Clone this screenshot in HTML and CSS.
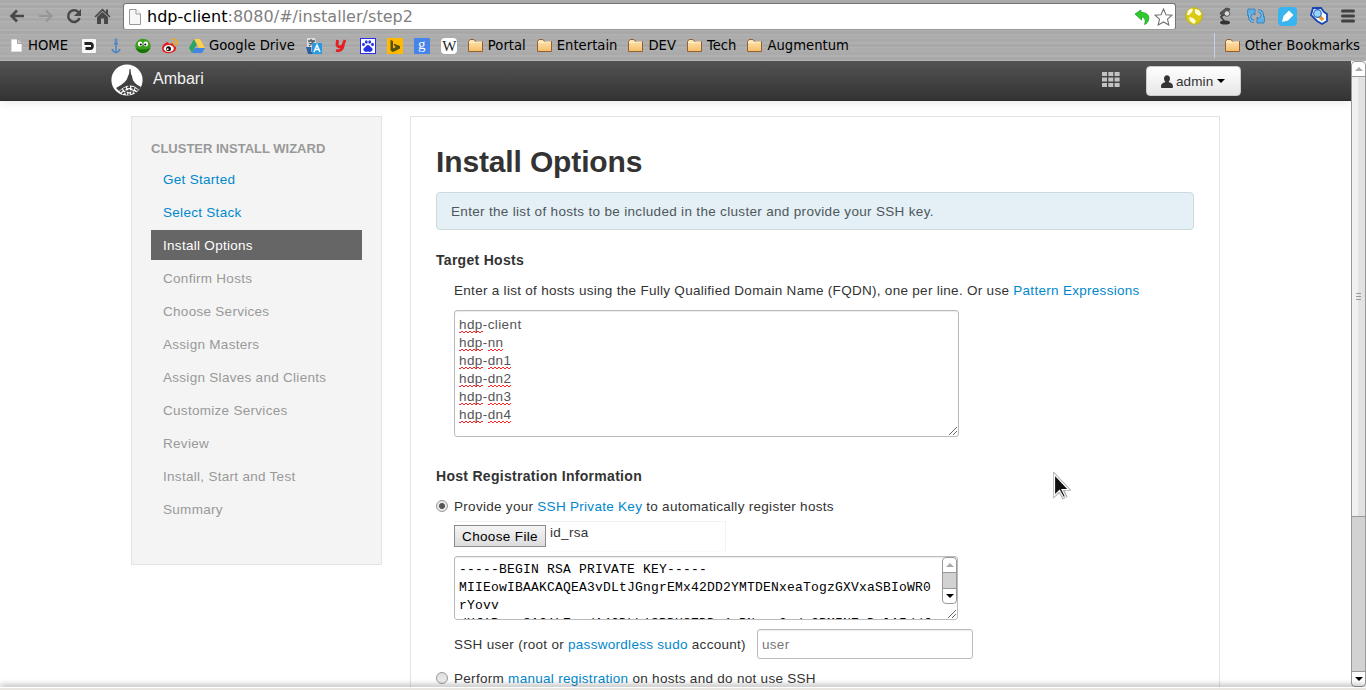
FILE: index.html
```html
<!DOCTYPE html>
<html lang="en">
<head>
<meta charset="utf-8">
<title>Ambari</title>
<link rel="stylesheet" href="styles.css">
</head>
<body>
<div class="browser">
  <header class="chrome">
    <div class="toolbar">
      <svg class="tool back" width="16" height="16" viewBox="0 0 16 16"><path d="M15 8H3M8 2.5L2.5 8L8 13.500" fill="none" stroke="#484848" stroke-width="2.600"/></svg>
      <svg class="tool forward" width="16" height="16" viewBox="0 0 16 16"><path d="M1 8H13M8 2.500L13.500 8L8 13.500" fill="none" stroke="#969696" stroke-width="2.200"/></svg>
      <svg class="tool reload" width="16" height="16" viewBox="0 0 16 16"><path d="M12.300 4.200A5.800 5.800 0 1 0 13.500 10" fill="none" stroke="#484848" stroke-width="2.500"/><path d="M15 1V8H8Z" fill="#484848"/></svg>
      <svg class="tool home" width="17" height="16" viewBox="0 0 17 16"><path d="M8.500 .5L12 4V1.500H14V6L16.500 8.500L15.500 9.500L8.500 3L1.500 9.500L.5 8.500Z" fill="#484848"/><path d="M3 9L8.500 4L14 9V16H10V10.500H7V16H3Z" fill="#484848"/></svg>
      <div class="omnibox">
        <svg width="12" height="16" viewBox="0 0 12 16"><path d="M.5 .5H7L11.500 5V15.500H.5Z" fill="#f6f6f6" stroke="#999"/><path d="M7 .5V5H11.500" fill="#fff" stroke="#999"/></svg>
        <span class="url"><b>hdp-client</b>:8080/#/installer/step2</span>
        <svg class="undo" width="16" height="16" viewBox="0 0 16 16"><path d="M1 5L7 1V3.500C13 3 16 7 14.500 11C14 13 12.500 15 10.500 15.500C12 11.500 11 8.500 7.500 8V11Z" fill="#2ecc2b" stroke="#16951a" stroke-width=".7"/></svg>
        <svg class="star" width="19" height="18" viewBox="0 0 19 18"><path d="M9.500 1L12 6.700L18 7.200L13.500 11.200L14.800 17L9.500 14L4.200 17L5.500 11.200L1 7.200L7 6.700Z" fill="#fff" stroke="#717171" stroke-width="1.100"/></svg>
      </div>
      <div class="extensions">
        <svg width="18" height="18" viewBox="0 0 18 18"><circle cx="9" cy="9" r="8.400" fill="#d8cb16" stroke="#b8a904" stroke-width=".6"/><path d="M3 3.500L6 1.500L8 2L7 5L4 8L2 8ZM10 2L14 3L16.500 7L14 9L10 6ZM4 10L8 11L11 14L9 17L5 14Z" fill="#fffce0"/></svg>
        <svg width="18" height="18" viewBox="0 0 18 18"><path d="M9 15L5 10L9 5" fill="none" stroke="#444" stroke-width="1.800"/><path d="M4 6L10 1L14 2L10 8L6 9Z" fill="#555" stroke="#333" stroke-width=".7"/><circle cx="11" cy="6.500" r="2.800" fill="#ddd" stroke="#555"/><ellipse cx="9" cy="15.500" rx="5" ry="2" fill="#333"/></svg>
        <svg width="18" height="18" viewBox="0 0 18 18"><g fill="none" stroke="#2d77b4" stroke-width="3.200"><path d="M7 14.500C3 14 2 11 3 7"/><path d="M11 3.500C15 4 16 7 15 11"/></g><path d="M0 8L1 2H8V8L6 6.500L4 9ZM18 10L17 16H10V10L12 11.500L14 9Z" fill="#61aee5" stroke="#2d77b4" stroke-width=".8"/><path d="M7 14.500C3 14 2 11 3 7M11 3.500C15 4 16 7 15 11" fill="none" stroke="#74bdf0" stroke-width="1.500"/></svg>
        <svg width="19" height="19" viewBox="0 0 19 19"><rect width="19" height="19" rx="4" fill="#38b4f0"/><path d="M4 15L5.500 9L11 3.500L15.500 8L10 13.500Z" fill="#fff"/></svg>
        <svg width="18" height="18" viewBox="0 0 18 18"><path d="M3 1H11L14 5L17 7V14L12 17L7 14L1 8Z" fill="#f4faff" stroke="#1746b3" stroke-width="1.800"/><path d="M9 9L13 13" stroke="#e4972b" stroke-width="3.200"/><circle cx="7.500" cy="6.500" r="3.800" fill="#9bd4fa" stroke="#2865ca" stroke-width="1.200"/></svg>
        <svg width="14" height="18" viewBox="0 0 14 18"><path d="M1.500 4H12.500M1.500 9H12.500M1.500 14H12.500" stroke="#404040" stroke-width="3" stroke-linecap="round"/></svg>
      </div>
    </div>
    <nav class="bookmarks">
      <span class="bookmark home-mark"><svg width="11" height="13" viewBox="0 0 11 13"><path d="M.5 .5H6.500L10.500 4.500V12.500H.5Z" fill="#fff" stroke="#ddd"/><path d="M6.500 0V4.500H11" fill="#ccc" stroke="#888" stroke-width=".7"/></svg>HOME</span>
      <svg class="fav" viewBox="0 0 16 16"><rect x="1" y="1" width="14" height="14" rx="1" fill="#f7f7f7"/><path d="M3.500 4H9.500C14 4 14 12 9.500 12H4.500V9H10V7H3.500Z" fill="#222"/></svg>
      <svg class="fav" viewBox="0 0 16 16"><path d="M8 3V14M4 11Q5 14 8 14.500Q11 14 12 11M6 5.500H10" fill="none" stroke="#4a83c4" stroke-width="1.500"/><circle cx="8" cy="2" r="1.200" fill="none" stroke="#4a83c4"/></svg>
      <svg class="fav" viewBox="0 0 16 16"><ellipse cx="8" cy="8" rx="7.800" ry="7.200" fill="#3b9e1c"/><path d="M1 10Q8 13 15 10Q13 15 8 15Q3 15 1 10" fill="#147406"/><circle cx="5.200" cy="6" r="2.400" fill="#fff"/><circle cx="10.800" cy="6" r="2.400" fill="#fff"/><circle cx="5.800" cy="6.500" r="1"/><circle cx="10.300" cy="6.500" r="1"/></svg>
      <svg class="fav" viewBox="0 0 16 16"><path d="M0 10Q1 5 6 4L7 6Q12 4 12 8Q16 9 13 13Q7 17 2 14Q0 13 0 10Z" fill="#e02020"/><ellipse cx="6.800" cy="10.500" rx="5" ry="3.500" fill="#fff"/><circle cx="6.500" cy="10.800" r="2.500" fill="#111"/><circle cx="5.700" cy="11.300" r="1" fill="#fff"/><path d="M10 1Q16 1 15 7M10 4Q13 4 12 7" fill="none" stroke="#f5a81c" stroke-width="1.500"/></svg>
      <span class="bookmark"><svg class="fav" viewBox="0 0 16 16"><path d="M5 1L8 6L3 15L0 10Z" fill="#2aa567"/><path d="M5 1H11L16 10H10Z" fill="#ffd04b"/><path d="M6 10H16L13 15H3Z" fill="#4285e5"/></svg>Google Drive</span>
      <svg class="fav" viewBox="0 0 16 16"><path d="M1 0H9L11 9H3L1 11Z" fill="#ddd"/><path d="M2 3H9M5 1V3M8 3L3 8M3 5L8 8" stroke="#4d5963" stroke-width="1.300"/><path d="M0 9H5V14H8V16H2Z" fill="#2863a5"/><rect x="6" y="5" width="10" height="11" rx="1" fill="#2699e3"/><path d="M8 14L11 7L14 14M9 11.500H13" fill="none" stroke="#fff" stroke-width="1.500"/></svg>
      <svg class="fav" viewBox="0 0 16 16"><path d="M4.500 2L4 7Q5 10 9.500 8L12 2M10.500 7Q9 14 3 12.500" fill="none" stroke="#e51d25" stroke-width="2.800"/></svg>
      <svg class="fav" viewBox="0 0 16 16"><rect x=".5" y=".5" width="15" height="15" fill="#fff" stroke="#2932e1"/><g fill="#2932e1"><ellipse cx="3.500" cy="6.500" rx="1.400" ry="1.800"/><ellipse cx="6.300" cy="4" rx="1.400" ry="1.800"/><ellipse cx="9.700" cy="4" rx="1.400" ry="1.800"/><ellipse cx="12.500" cy="6.500" rx="1.400" ry="1.800"/><path d="M8 7C10 7 10 9 12 10C14 12 11 15 8 13.500C5 15 2 12 4 10C6 9 6 7 8 7Z"/></g></svg>
      <svg class="fav" viewBox="0 0 16 16"><rect width="16" height="16" fill="#ffb900"/><path d="M3.500 2L6 3V10.500L9 9L7.500 8L6.500 5.500L13 8V10.500L6 14L3.500 12.500Z" fill="#55500b"/></svg>
      <span class="fav letter google">g</span>
      <span class="fav letter wiki">W</span>
      <span class="bookmark"><svg class="fav" viewBox="0 0 16 16"><use href="#folder"/></svg>Portal</span>
      <span class="bookmark"><svg class="fav" viewBox="0 0 16 16"><use href="#folder"/></svg>Entertain</span>
      <span class="bookmark"><svg class="fav" viewBox="0 0 16 16"><use href="#folder"/></svg>DEV</span>
      <span class="bookmark"><svg class="fav" viewBox="0 0 16 16"><use href="#folder"/></svg>Tech</span>
      <span class="bookmark"><svg class="fav" viewBox="0 0 16 16"><use href="#folder"/></svg>Augmentum</span>
      <span class="bookmark other"><svg class="fav" viewBox="0 0 16 16"><defs><linearGradient id="fold" x2="0" y2="1"><stop stop-color="#ffe8b8"/><stop offset="1" stop-color="#f5bd68"/></linearGradient><g id="folder"><path d="M.5 13.500V3.500L2 1.500H6L7.500 3.500H14.500V13.500Z" fill="url(#fold)" stroke="#936035"/><path d="M1 4.500H7L8.500 3.800H14" fill="none" stroke="#fff3d5"/></g></defs><use href="#folder"/></svg>Other Bookmarks</span>
    </nav>
  </header>

  <div class="viewport">
    <div class="page">
      <div class="navbar">
        <svg class="logo" width="32" height="32" viewBox="0 0 32 32"><circle cx="16" cy="16" r="15.600" fill="#fff"/><path d="M18.500 5H19.500L20 10L21 12C21.500 17 24 20 30 23L28 26C22 20 16 20 8 27L5 24C12 20 16 17 17 12L18 10Z" fill="#414141"/><path d="M9 28Q18 19 27 27M11 30Q18 24 25 29M18 21V31M13 24L16 31M23 23L20 31" fill="none" stroke="#414141" stroke-width="1.600" stroke-dasharray="3 1.200"/></svg>
        <span class="brand">Ambari</span>
        <svg class="apps" width="18" height="15" viewBox="0 0 18 15"><path d="M0 2H18M0 7.500H18M0 13H18" stroke="#c3c3c3" stroke-width="4" stroke-dasharray="5 1.300"/></svg>
        <div class="admin"><svg width="12" height="13" viewBox="0 0 12 13"><path d="M3 3.500C3 -1 9 -1 9 3.500C9 5.500 8 6.500 7.500 7C9 8 12 7.500 12 12Q12 13 11 13H1Q0 13 0 12C0 7.500 3 8 4.500 7C4 6.500 3 5.500 3 3.500Z" fill="#333"/></svg><span>admin</span><i class="caret"></i></div>
      </div>
      <main class="columns">
        <aside class="wizard">
          <h2>CLUSTER INSTALL WIZARD</h2>
          <ul>
            <li class="done">Get Started</li>
            <li class="done">Select Stack</li>
            <li class="active">Install Options</li>
            <li>Confirm Hosts</li>
            <li>Choose Services</li>
            <li>Assign Masters</li>
            <li>Assign Slaves and Clients</li>
            <li>Customize Services</li>
            <li>Review</li>
            <li>Install, Start and Test</li>
            <li>Summary</li>
          </ul>
        </aside>
        <section class="content">
          <h1>Install Options</h1>
          <div class="alert">Enter the list of hosts to be included in the cluster and provide your SSH key.</div>
          <h5>Target Hosts</h5>
          <p class="hint">Enter a list of hosts using the Fully Qualified Domain Name (FQDN), one per line. Or use <a>Pattern Expressions</a></p>
          <div class="field hosts">
            <div><u>hdp</u>-client</div><div><u>hdp</u>-<u>nn</u></div><div><u>hdp</u>-<u>dn1</u></div><div><u>hdp</u>-<u>dn2</u></div><div><u>hdp</u>-<u>dn3</u></div><div><u>hdp</u>-<u>dn4</u></div>
            <svg class="grip" width="8" height="8" viewBox="0 0 8 8"><path d="M0 8L8 0M4 8L8 4" stroke="#555" stroke-width=".9"/></svg>
          </div>
          <h5 class="registration">Host Registration Information</h5>
          <div class="option"><i class="radio checked"></i><span>Provide your <a>SSH Private Key</a> to automatically register hosts</span></div>
          <div class="file"><span class="choose">Choose File</span><span class="filename">id_rsa</span></div>
          <div class="field key">
            <div class="keytext">-----BEGIN RSA PRIVATE KEY-----<br>MIIEowIBAAKCAQEA3vDLtJGngrEMx42DD2YMTDENxeaTogzGXVxaSBIoWR0<br>rYovv<br>/UfiPxxn8AC1LZan/A4CDkhi8PDU8ZDDz4wPNsxm0adsCBMINZyDxlAI//f</div>
            <div class="minibar"><span class="up"><i></i></span><span class="thumb"></span><span class="down"><i></i></span></div>
            <svg class="grip" width="8" height="8" viewBox="0 0 8 8"><path d="M0 8L8 0M4 8L8 4" stroke="#555" stroke-width=".9"/></svg>
          </div>
          <div class="sshuser"><span>SSH user (root or <a>passwordless sudo</a> account)</span><div class="field user">user</div></div>
          <div class="option manual"><i class="radio"></i><span>Perform <a>manual registration</a> on hosts and do not use SSH</span></div>
        </section>
      </main>
    </div>
    <div class="scrollbar"><span class="up"><i></i></span><span class="handle"><i></i></span><span class="track"></span><span class="down"><i></i></span></div>
  </div>
  <footer class="taskbar"></footer>
  <svg class="cursor" width="18" height="28" viewBox="0 0 18 28"><path d="M1 1V25L6.500 20L10 26.500L13.500 24.500L10.500 18H17Z" fill="#111" stroke="#aaa" stroke-width="1.600"/><path d="M1.500 2.500V23.500L6.500 18.500L10.500 25.500L12.500 24.500L9 17.500H15.500Z" fill="#111" stroke="#fff" stroke-width="1.200"/></svg>
</div>
</body>
</html>
```
FILE: styles.css
```css
* { box-sizing: border-box; }
body { margin: 0; overflow: hidden; font: 13.5px/20px "Liberation Sans", sans-serif; letter-spacing: .29px; color: #333; background: #fff; }
svg { display: block; flex: none; }
i { display: block; font-style: normal; }
a { color: #08c; }
.browser { position: relative; display: flex; flex-direction: column; width: 1366px; height: 690px; overflow: hidden; }

.chrome { height: 61px; flex: none; letter-spacing: 0; background: repeating-linear-gradient(#aaa 0 3px, #b0b0b0 3px 5px, #a8a8a8 5px 8px, #b3b3b3 8px 9px, #adadad 9px 13px); font-family: "DejaVu Sans", sans-serif; color: #000; }
.toolbar { display: flex; align-items: center; height: 32px; padding-left: 9px; }
.forward { margin-left: 13px; }
.reload { margin-left: 12px; }
.home { margin-left: 12px; }
.omnibox { display: flex; align-items: center; width: 1053px; height: 27px; margin: 1px 0 0 12px; padding: 0 2px 0 5px; border: 1px solid #747474; border-bottom-color: #949d94; border-radius: 3px; background: #fff; }
.url { margin-left: 6px; font-size: 16px; letter-spacing: .03px; color: #808080; }
.url b { font-weight: 400; color: #000; }
.undo { margin-left: auto; }
.star { margin-left: 4px; }
.extensions { display: flex; align-items: center; gap: 13px; margin-left: 9px; }
.bookmarks { display: flex; align-items: center; gap: 11px; height: 27px; padding: 0 6px 0 11px; font-size: 13.200px; white-space: nowrap; }
.bookmark { display: flex; align-items: center; gap: 4px; }
.home-mark { gap: 6px; width: 59px; }
.fav { width: 16px; height: 16px; flex: none; }
.letter { text-align: center; font: 15px/13px "Liberation Serif", serif; }
.google { color: #fff; background: #4683ea; border-radius: 1px; }
.wiki { color: #222; background: #fff; border-radius: 4px; line-height: 16px; letter-spacing: -1px; }
.other { margin-left: auto; height: 25px; padding-left: 10px; border-left: 1px solid #c5d0ee; }

.viewport { display: flex; height: 626px; }
.page { width: 1351px; height: 626px; overflow: hidden; }
.navbar { position: relative; display: flex; align-items: center; height: 40px; padding-left: 111px; background: linear-gradient(#535353, #333); border-bottom: 1px solid #2b2b2b; box-shadow: 0 1px 10px rgba(0,0,0,.1); }
.logo { margin-top: -2px; }
.brand { margin: -4px 0 0 10px; font-size: 16px; color: #f2f2f2; letter-spacing: 0; }
.apps { margin: -3px 0 0 auto; }
.admin { display: flex; align-items: center; width: 95px; height: 30px; margin: 1px 110px 0 26px; padding-left: 14px; letter-spacing: .1px; border: 1px solid #ccc; border-radius: 4px; background: linear-gradient(#fff, #e6e6e6); }
.admin span { margin: 1px 0 0 3px; }
.caret { margin-left: 4px; border: 4px solid transparent; border-top-color: #000; border-bottom: 0; }
.columns { display: grid; grid-template-columns: 251px 810px; column-gap: 28px; align-items: start; padding: 15px 0 0 131px; }
.wizard { height: 449px; padding: 22px 19px 0; background: #f4f4f4; border: 1px solid #e3e3e3; }
.wizard h2 { margin: 0 0 5px; font-size: 13px; line-height: 20px; letter-spacing: 0; color: #999; white-space: nowrap; }
.wizard ul { display: grid; gap: 3px; margin: 0; padding: 0; list-style: none; }
.wizard li { height: 30px; padding: 1px 0 0 12px; line-height: 30px; color: #999; }
.wizard .done { color: #08c; }
.wizard .active { color: #fff; background: #666; }

.content { height: 600px; padding: 25px; border: 1px solid #e3e3e3; }
h1 { margin: 0 0 10px; font-size: 30px; line-height: 40px; letter-spacing: -.14px; }
.alert { height: 38px; padding-left: 14px; line-height: 37px; letter-spacing: .32px; color: #4e575b; background: #e4f0f5; border: 1px solid #cbdadd; border-radius: 4px; }
h5 { margin: 20px 0 10px; font-size: 14px; line-height: 20px; letter-spacing: .29px; }
.hint { height: 20px; margin: 0 0 10px 18px; padding-top: 1px; white-space: nowrap; }
.field { position: relative; margin-left: 18px; border: 1px solid #bbb; border-radius: 3px; background: #fff; box-shadow: inset 0 1px 1px rgba(0,0,0,.08); color: #555; }
.hosts { width: 505px; height: 127px; padding: 5px 4px 4px; line-height: 18px; letter-spacing: .4px; }
.hosts u { text-decoration: none; padding-bottom: 1px; background: linear-gradient(90deg, #f22 2px, transparent 2px) 0 100%/4px 1px repeat-x, linear-gradient(90deg, transparent 2px, #f22 2px) 0 calc(100% - 1px)/4px 1px repeat-x; }
.grip { position: absolute; right: 1px; bottom: 1px; }
.registration { margin-top: 29px; }
.option { display: flex; align-items: center; height: 20px; gap: 6px; white-space: nowrap; }
.option span { padding-top: 1px; }
.radio { width: 12px; height: 12px; border: 1px solid #999; border-radius: 50%; background: linear-gradient(#ddd, #f0f0f0); }
.checked { background: radial-gradient(circle, #555 2.500px, #e8e8e8 3.500px); }
.file { display: flex; align-items: flex-start; width: 272px; height: 31px; margin: 5px 0 4px 18px; border: 1px solid #f2f2f2; border-left: 0; border-bottom-color: #fafafa; }
.choose { width: 92px; height: 22px; margin-top: 3px; text-align: center; line-height: 21px; letter-spacing: .35px; color: #000; border: 1px solid #8c8c8c; background: linear-gradient(#f5f5f5, #dcdcdc); }
.filename { margin: 1px 0 0 4px; }
.key { width: 504px; height: 64px; }
.keytext { height: 62px; padding: 4px 4px 0; overflow: hidden; font: 13px/18px "Liberation Mono", monospace; letter-spacing: .2px; white-space: nowrap; color: #000; }
.minibar { position: absolute; top: 0; right: 0; display: flex; flex-direction: column; width: 15px; height: 47px; border: 1px solid #999; border-radius: 4px; background: #fff; overflow: hidden; }
.thumb { flex: 1; background: #d2d2d2; border: solid #999; border-width: 1px 0; }
.up, .down { display: flex; align-items: center; justify-content: center; flex: none; height: 14px; }
.up i { border: 4px solid transparent; border-bottom-color: #aaa; border-top: 0; }
.down i { border: 4px solid transparent; border-top-color: #000; border-bottom: 0; }
.sshuser { display: flex; align-items: center; height: 30px; margin: 9px 0 9px 18px; white-space: nowrap; }
.sshuser > span { width: 293px; padding-top: 1px; }
.user { width: 216px; height: 30px; margin-left: 10px; padding: 1px 0 0 4px; line-height: 28px; color: #777; }

.scrollbar { display: flex; flex-direction: column; width: 15px; height: 626px; border: 1px solid #999; border-radius: 4px; background: #fff; overflow: hidden; }
.handle { display: flex; align-items: center; justify-content: center; height: 441px; border: solid #999; border-width: 1px 0; background: linear-gradient(90deg, #f0f0f0 50%, #e2e2e2 50%); }
.handle i { width: 5px; height: 7px; background: repeating-linear-gradient(#999 0 1px, transparent 1px 3px); }
.track { flex: 1; background: #d2d2d2; border-bottom: 1px solid #999; }
.taskbar { position: relative; height: 3px; border-top: 1px solid #fff; background: #e9e5e0; box-shadow: 0 -1px 6px rgba(0,0,0,.5); }
.cursor { position: absolute; left: 1053px; top: 472px; }
```
